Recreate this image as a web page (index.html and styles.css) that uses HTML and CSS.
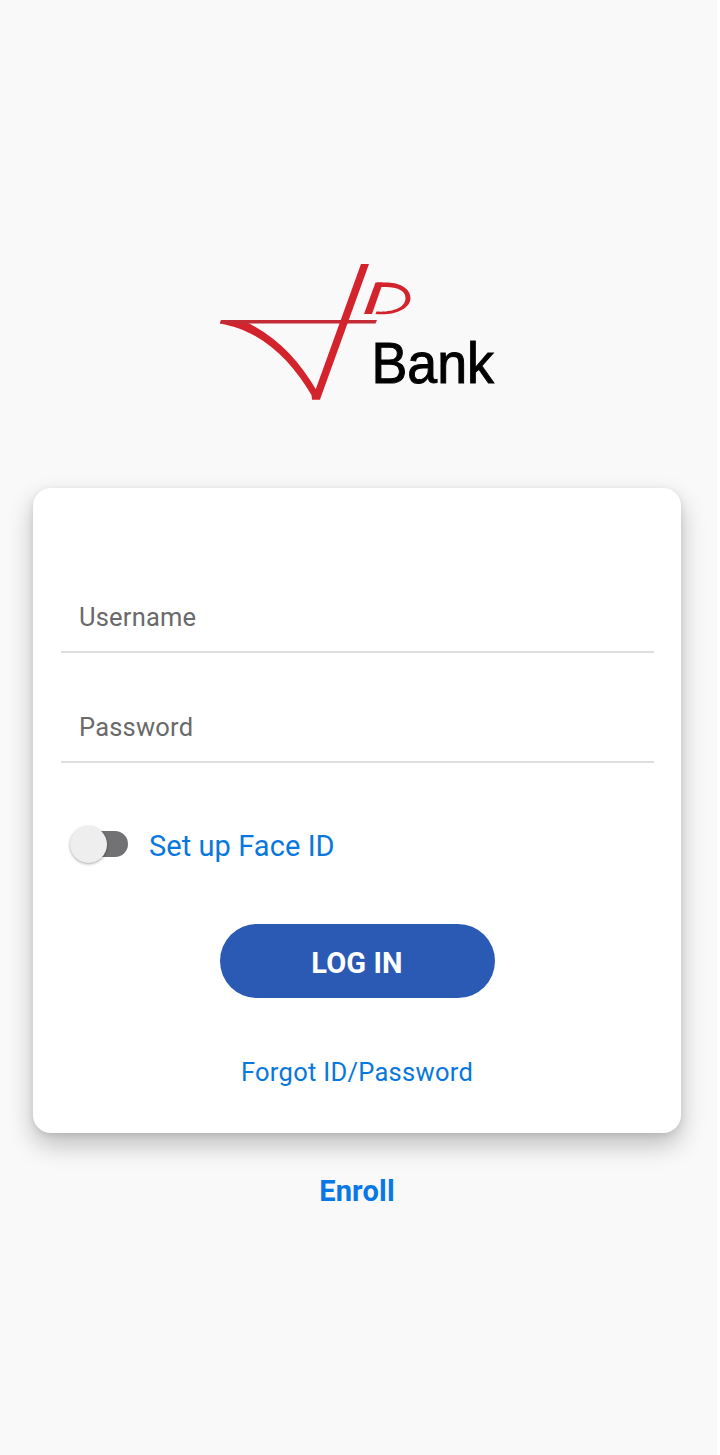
FILE: index.html
```html
<!DOCTYPE html>
<html lang="en">
<head>
<meta charset="utf-8">
<title>VIP Bank</title>
<link rel="stylesheet" href="styles.css">
</head>
<body>
<main class="screen">
  <svg class="logo" viewBox="215 255 290 150" role="img">
    <g fill="#d3232c">
      <path d="M312 399.500L311.500 395C291 361 263 331 220 323.500L221 320.500H243C277 336 299 361 316 389.500L320 399.500Z"/>
      <path d="M375.500 282.500H383L372 314H364Z"/>
      <path d="M377 282.500H388C400 283 410.500 288.500 410.500 298C410.500 309 394 316 375.500 314L376.500 311.500C393 312.500 405.500 307.500 405.500 298C405.500 290.500 397 287 386 287H377Z"/>
    </g>
    <path d="M221 320H377L375.500 323.500H220Z" fill="#c32b35"/>
    <path d="M361 264L369 264L320 399.500H312Z" fill="#d3232c"/>
    <text class="logo-name" x="371.500" y="383" textLength="122.500" lengthAdjust="spacingAndGlyphs">Bank</text>
  </svg>
  <form class="card">
    <input class="field" type="text" placeholder="Username">
    <input class="field" type="password" placeholder="Password">
    <label class="face"><span class="switch"><span class="knob"></span></span><span class="face-label">Set up Face ID</span></label>
    <button class="login" type="button">LOG IN</button>
    <a class="forgot">Forgot ID/Password</a>
  </form>
  <a class="enroll">Enroll</a>
</main>
</body>
</html>
```
FILE: styles.css
```css
* { box-sizing: border-box; }
body { margin: 0; background: #fff; font-family: Roboto, sans-serif; }
.screen {
  display: flex;
  flex-direction: column;
  align-items: center;
  width: 717px;
  height: 1455px;
  padding: 255px 36px 0 33px;
  background: #f9f9f9;
  overflow: hidden;
}
.logo { width: 290px; height: 150px; margin-left: 6px; flex: none; }
.logo-name { font: 58px "Liberation Sans", sans-serif; fill: #000; stroke: #000; stroke-width: 1px; }
.card {
  display: flex;
  flex-direction: column;
  align-items: center;
  width: 648px;
  height: 645px;
  margin-top: 83px;
  padding: 94px 27px 0 28px;
  border-radius: 18px;
  background: #fff;
  box-shadow: 0 12px 26px rgba(0, 0, 0, .24), 0 2px 7px rgba(0, 0, 0, .1);
}
.field {
  width: 593px;
  height: 71px;
  margin-bottom: 39px;
  padding: 0 18px;
  border: 0;
  border-bottom: 2px solid #dedede;
  background: transparent;
  font: 25.5px Roboto, sans-serif;
  letter-spacing: .2px;
}
.field::placeholder { color: #6a6a6a; opacity: 1; }
.face {
  display: flex;
  align-items: center;
  align-self: flex-start;
  gap: 21px;
  height: 40px;
  margin: 22px 0 0 9px;
  color: #0878dc;
  font-size: 29px;
  letter-spacing: .07px;
}
.face-label { padding-top: 4px; }
.switch {
  display: flex;
  align-items: center;
  width: 52px;
  height: 26px;
  margin-left: 6px;
  border-radius: 13px;
  background: #727274;
}
.knob {
  flex: none;
  width: 37px;
  height: 37px;
  margin-left: -6px;
  border-radius: 50%;
  background: #eee;
  box-shadow: 0 1px 3px rgba(0, 0, 0, .35);
}
.login {
  width: 275px;
  height: 74px;
  margin: 60px 1px 0 0;
  padding: 4px 0 0;
  border: 0;
  border-radius: 37px;
  background: #2a5ab3;
  color: #fff;
  font: bold 29px Roboto, sans-serif;
  letter-spacing: .1px;
}
.forgot { margin: 59px 1px 0 0; color: #0878dc; font-size: 25.5px; line-height: 30px; letter-spacing: .28px; }
.enroll { margin-top: 41px; color: #0878e6; font-size: 29px; font-weight: bold; line-height: 34px; letter-spacing: .2px; }
```
